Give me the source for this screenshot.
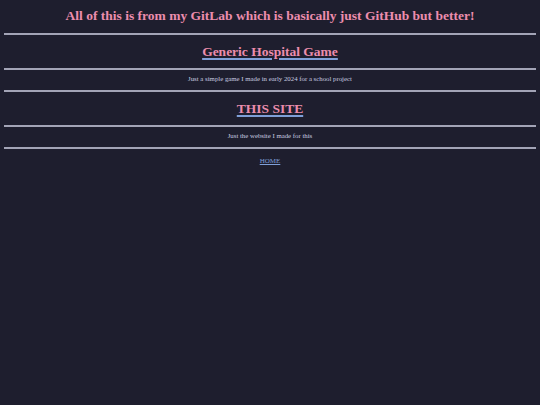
import React from 'react';

const Rule = () => <div className="h-[2px] bg-[#a3a4b6] mx-[4px]" />;

const Project = ({ title, blurb }) => (
  <>
    <div className="text-center pt-[6px] pb-[6px] leading-[20px]">
      <a href="#" className="text-[13.5px] font-bold text-[#ec8dad] underline decoration-[#7f9fd8] decoration-[2px] underline-offset-[2px]">
        {title}
      </a>
    </div>
    <Rule />
    <p className="text-center text-[6.8px] leading-[10px] text-[#c9cde0] pt-[4px] pb-[6px]">{blurb}</p>
    <Rule />
  </>
);

export default function App() {
  return (
    <div className="min-h-[405px] bg-[#1e1e2e] font-['Liberation_Serif','Times_New_Roman',serif]">
      <h1 className="text-center text-[13.5px] leading-[20px] font-bold text-[#ec8dad] pt-[6px] pb-[7px]">
        All of this is from my GitLab which is basically just GitHub but better!
      </h1>
      <Rule />
      <Project title="Generic Hospital Game" blurb="Just a simple game I made in early 2024 for a school project" />
      <Project title="THIS SITE" blurb="Just the website I made for this" />
      <div className="text-center pt-[4px] leading-[10px]">
        <a href="#" className="text-[7px] text-[#7f9fd8] underline">HOME</a>
      </div>
    </div>
  );
}
